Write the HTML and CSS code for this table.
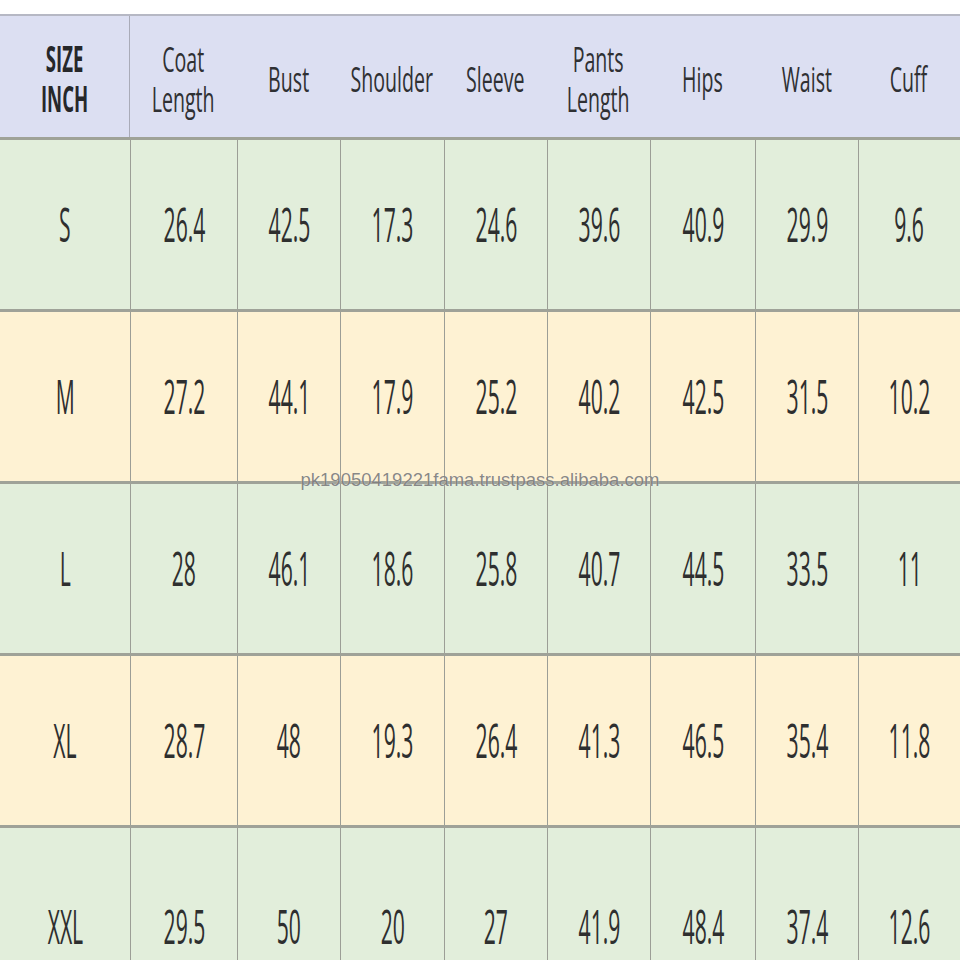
FILE: index.html
```html
<!DOCTYPE html>
<html lang="en">
<head>
<meta charset="utf-8">
<title>Size Chart</title>
<link rel="stylesheet" href="styles.css">
</head>
<body>
<div class="page">
  <div class="chart">
    <div class="row head">
      <div class="cell first"><span class="lbl bold">SIZE<br>INCH</span></div>
      <div class="cell"><span class="lbl">Coat<br>Length</span></div>
      <div class="cell"><span class="lbl">Bust</span></div>
      <div class="cell"><span class="lbl">Shoulder</span></div>
      <div class="cell"><span class="lbl">Sleeve</span></div>
      <div class="cell"><span class="lbl">Pants<br>Length</span></div>
      <div class="cell"><span class="lbl">Hips</span></div>
      <div class="cell"><span class="lbl">Waist</span></div>
      <div class="cell"><span class="lbl">Cuff</span></div>
    </div>
    <div class="row green">
      <div class="cell first"><span class="val">S</span></div>
      <div class="cell"><span class="val">26.4</span></div>
      <div class="cell"><span class="val">42.5</span></div>
      <div class="cell"><span class="val">17.3</span></div>
      <div class="cell"><span class="val">24.6</span></div>
      <div class="cell"><span class="val">39.6</span></div>
      <div class="cell"><span class="val">40.9</span></div>
      <div class="cell"><span class="val">29.9</span></div>
      <div class="cell"><span class="val">9.6</span></div>
    </div>
    <div class="row yellow">
      <div class="cell first"><span class="val">M</span></div>
      <div class="cell"><span class="val">27.2</span></div>
      <div class="cell"><span class="val">44.1</span></div>
      <div class="cell"><span class="val">17.9</span></div>
      <div class="cell"><span class="val">25.2</span></div>
      <div class="cell"><span class="val">40.2</span></div>
      <div class="cell"><span class="val">42.5</span></div>
      <div class="cell"><span class="val">31.5</span></div>
      <div class="cell"><span class="val">10.2</span></div>
    </div>
    <div class="row green">
      <div class="cell first"><span class="val">L</span></div>
      <div class="cell"><span class="val">28</span></div>
      <div class="cell"><span class="val">46.1</span></div>
      <div class="cell"><span class="val">18.6</span></div>
      <div class="cell"><span class="val">25.8</span></div>
      <div class="cell"><span class="val">40.7</span></div>
      <div class="cell"><span class="val">44.5</span></div>
      <div class="cell"><span class="val">33.5</span></div>
      <div class="cell"><span class="val">11</span></div>
    </div>
    <div class="row yellow">
      <div class="cell first"><span class="val">XL</span></div>
      <div class="cell"><span class="val">28.7</span></div>
      <div class="cell"><span class="val">48</span></div>
      <div class="cell"><span class="val">19.3</span></div>
      <div class="cell"><span class="val">26.4</span></div>
      <div class="cell"><span class="val">41.3</span></div>
      <div class="cell"><span class="val">46.5</span></div>
      <div class="cell"><span class="val">35.4</span></div>
      <div class="cell"><span class="val">11.8</span></div>
    </div>
    <div class="row green last">
      <div class="cell first"><span class="val">XXL</span></div>
      <div class="cell"><span class="val">29.5</span></div>
      <div class="cell"><span class="val">50</span></div>
      <div class="cell"><span class="val">20</span></div>
      <div class="cell"><span class="val">27</span></div>
      <div class="cell"><span class="val">41.9</span></div>
      <div class="cell"><span class="val">48.4</span></div>
      <div class="cell"><span class="val">37.4</span></div>
      <div class="cell"><span class="val">12.6</span></div>
    </div>
  </div>
  <div class="watermark">pk19050419221fama.trustpass.alibaba.com</div>
</div>
</body>
</html>
```

FILE: styles.css
```css
html, body {
  margin: 0;
  padding: 0;
  background: #ffffff;
}

.page {
  position: relative;
  width: 960px;
  height: 960px;
  overflow: hidden;
  padding-top: 14px;
  box-sizing: border-box;
}

.chart {
  display: flex;
  flex-direction: column;
}

.row {
  display: grid;
  grid-template-columns: 130px 107px 103px 104px 103px 103px 105px 103px 102px;
  height: 172px;
  border-top: 3px solid #9fa298;
  box-sizing: border-box;
}

.row.head {
  height: 123px;
  border-top: 2px solid #b6b8c4;
  background: #dcdff2;
}

.row.green { background: #e2eedb; }
.row.yellow { background: #fef2d3; }
.row.last { height: 200px; }

.cell {
  display: flex;
  align-items: center;
  justify-content: center;
  border-left: 1.5px solid #9c9e96;
}

.cell.first { border-left: none; }

.head .cell { border-left: none; }
.head .cell.first { border-right: 1.5px solid #a9abb8; }

.lbl {
  display: inline-block;
  font-family: "Open Sans", "Noto Sans", sans-serif;
  font-size: 35px;
  line-height: 40px;
  color: #2f3033;
  text-align: center;
  transform: scaleX(0.56);
  white-space: nowrap;
  padding-top: 4px;
}

.lbl.bold {
  font-weight: 700;
  color: #26272a;
  transform: scaleX(0.53);
}

.val {
  display: inline-block;
  font-family: "Open Sans", "Noto Sans", sans-serif;
  font-size: 47px;
  line-height: 1;
  color: #2e2f2f;
  transform: scaleX(0.45);
  white-space: nowrap;
  padding-bottom: 0;
}

.row.last .val { padding-top: 0; }

.watermark {
  position: absolute;
  left: 0;
  right: 0;
  top: 469px;
  text-align: center;
  font-family: "Liberation Sans", Arial, sans-serif;
  font-size: 18.5px;
  color: rgba(105, 105, 105, 0.8);
  text-shadow: 0 0 1px rgba(255, 255, 255, 0.7);
}
```
